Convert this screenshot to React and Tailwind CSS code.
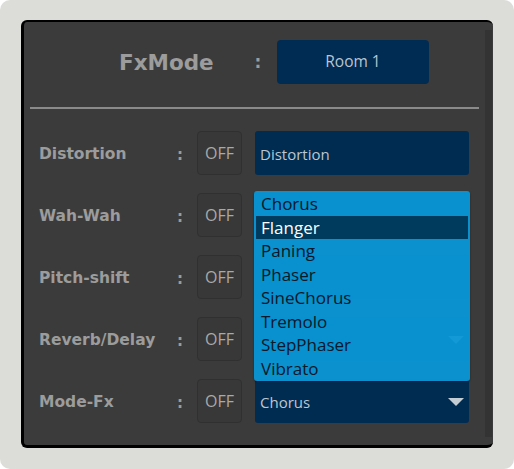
import React from "react";

const rows = [
  { label: "Distortion", value: "Distortion", arrow: false },
  { label: "Wah-Wah", value: "", arrow: false },
  { label: "Pitch-shift", value: "", arrow: false },
  { label: "Reverb/Delay", value: "", arrow: true },
  { label: "Mode-Fx", value: "Chorus", arrow: true },
];

const items = ["Chorus", "Flanger", "Paning", "Phaser", "SineChorus", "Tremolo", "StepPhaser", "Vibrato"];

function Arrow() {
  return (
    <svg width="16" height="8" viewBox="0 0 16 8" className="shrink-0">
      <polygon points="0,0 16,0 8,8" fill="#c4ccd4" />
    </svg>
  );
}

export default function App() {
  const label = { fontFamily: '"DejaVu Sans", Tahoma, sans-serif' };
  const ui = { fontFamily: '"Open Sans", "Noto Sans", sans-serif' };
  return (
    <div className="w-[514px] h-[469px] bg-white">
      <div className="w-[514px] h-[469px] bg-[#dcdcd8] rounded-[10px] pt-[20px] pl-[21px]">
        <div className="relative w-[472px] h-[428px] bg-[#3b3b3b] rounded-[6px] border-t-[2px] border-l-[3px] border-b-[3px] border-black flex">
          <div className="flex-1 flex flex-col">
            {/* header */}
            <div className="flex items-center h-[44px] mt-[18px]">
              <div className="w-[184px] pl-[95px] pt-[2px] text-[21.5px] font-bold text-[#9c9c9c]" style={label}>FxMode</div>
              <div className="w-[20px] ml-[40px] pt-[2px] text-center text-[17px] font-bold text-[#9c9c9c]" style={label}>:</div>
              <div className="w-[152px] h-[44px] ml-[9px] bg-[#002b52] rounded-[4px] flex items-center justify-center text-[15.5px] text-[#b9c5d1]" style={ui}>Room 1</div>
            </div>
            <div className="ml-[6px] w-[449px] h-[2px] bg-[#8a8a8a] mt-[23px]" />
            <div className="flex flex-col gap-[18px] mt-[22px]">
              {rows.map((r) => (
                <div key={r.label} className="flex items-center h-[44px]">
                  <div className="w-[147px] pl-[15px] pt-[4px] text-[15.5px] font-bold text-[#9c9c9c] whitespace-nowrap" style={label}>{r.label}</div>
                  <div className="w-[18px] pt-[4px] text-center text-[15px] font-bold text-[#9c9c9c]" style={label}>:</div>
                  <div className="ml-[8px] w-[45px] h-[44px] rounded-[4px] bg-[#383838] border border-[#303030] flex items-center justify-center text-[16px] text-[#a9a9a9]" style={ui}>OFF</div>
                  <div className="ml-[13px] w-[214px] h-[44px] rounded-[3px] bg-[#012c52] flex items-center justify-between pl-[5px] pr-[5px] pt-[2px] text-[15px] text-[#bcc6d0]" style={ui}>
                    <span>{r.value}</span>
                    {r.arrow && <Arrow />}
                  </div>
                </div>
              ))}
            </div>
          </div>
          <div className="w-[7px] mt-[8px] mb-[8px] mr-[1px] bg-[#333333]" />

          {/* dropdown popup */}
          <div className="absolute left-[230px] top-[169px] w-[216px] h-[190px] bg-[#0896d6]/95 rounded-[3px] pt-[1px] shadow-[0_1px_2px_rgba(0,0,0,0.4)]" style={ui}>
            {items.map((it) => (
              <div
                key={it}
                className={
                  it === "Flanger"
                    ? "mx-[2px] h-[23.5px] flex items-center pl-[5px] text-[17px] bg-[#003a5c] text-white"
                    : "mx-[2px] h-[23.5px] flex items-center pl-[5px] text-[17px] text-[#061829]"
                }
              >
                {it}
              </div>
            ))}
          </div>
        </div>
      </div>
    </div>
  );
}
